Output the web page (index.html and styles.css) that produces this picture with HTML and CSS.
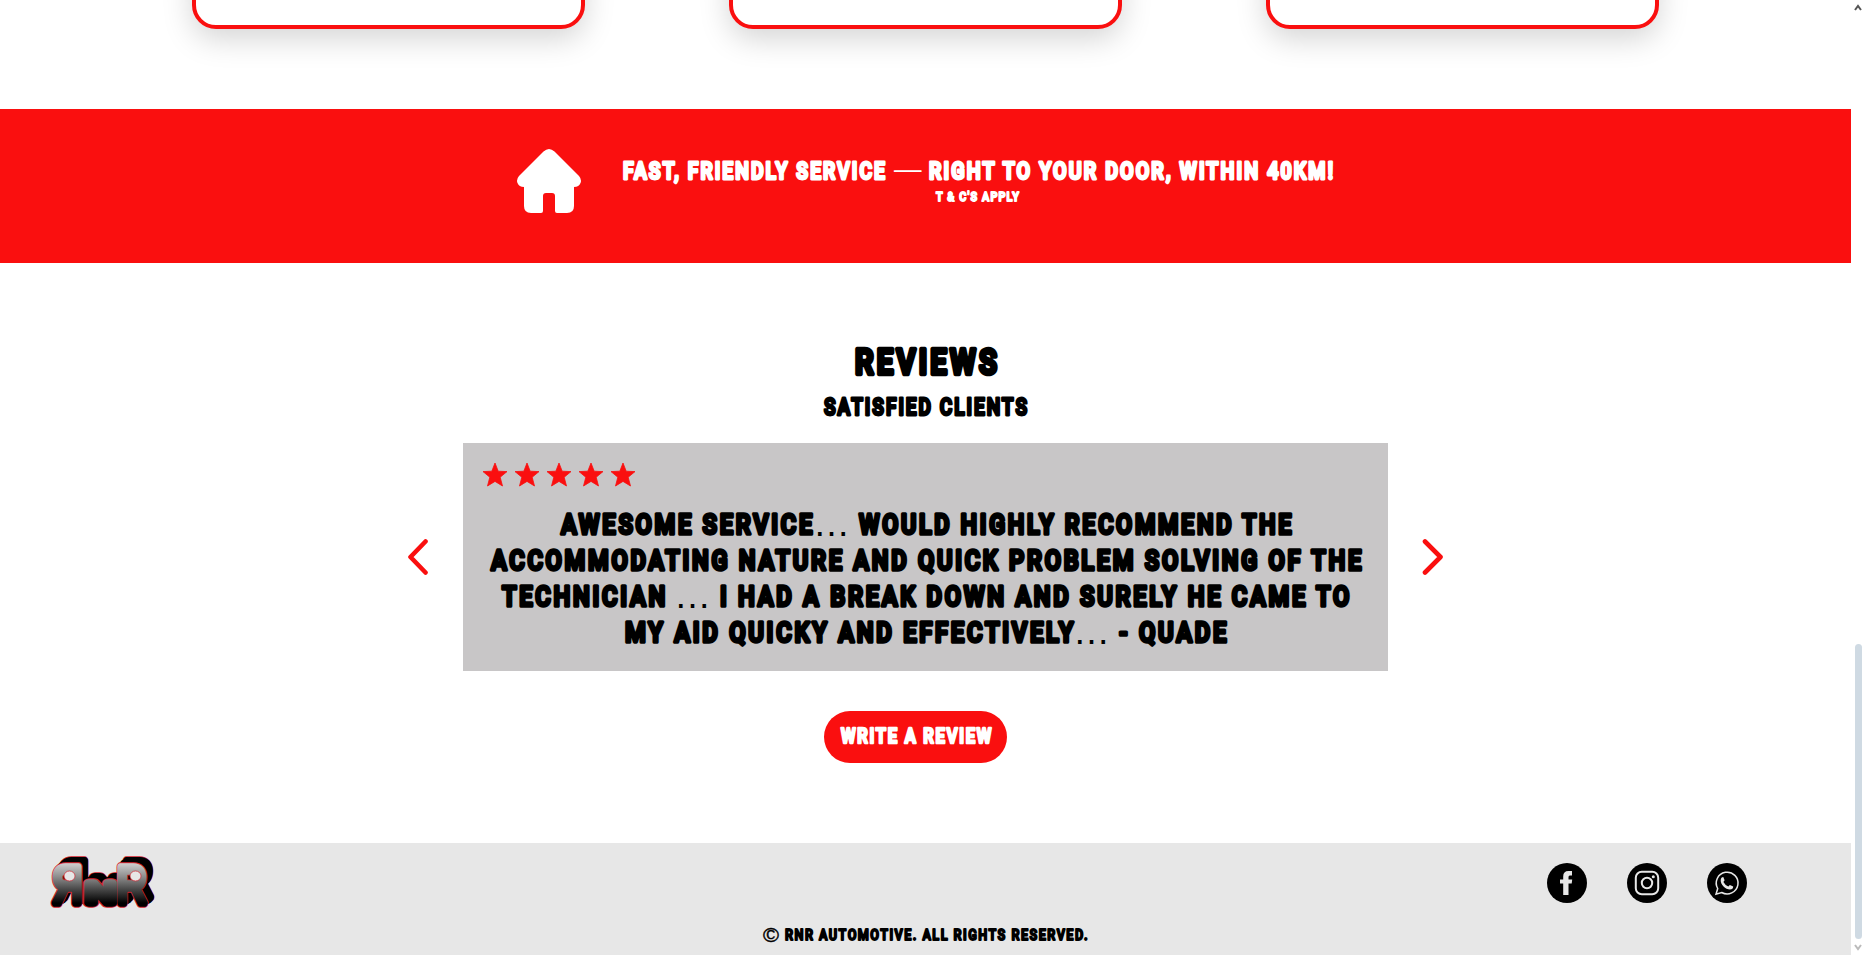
FILE: index.html
```
<!DOCTYPE html>
<html lang="en">
<head>
<meta charset="utf-8">
<title>RNR Automotive</title>
<link rel="stylesheet" href="styles.css">
</head>
<body>
<div class="window">
<div class="page">
  <main>
    <section class="cards">
      <div class="card"></div><div class="card"></div><div class="card"></div>
    </section>

    <section class="banner">
      <svg class="house" viewBox="0 0 64 64"><path fill-rule="evenodd" d="M26.5 2.5Q32-2.500 37.500 2.500L62 27Q65 30.500 63.500 34Q62 38 57 38V57Q57 64 50 64H40Q38 64 38 62V47Q38 44 35 44H29Q26 44 26 47V62Q26 64 24 64H14Q7 64 7 57V38Q2 38 .5 34Q-1 30.500 2 27Z"/></svg>
      <svg class="lettering" width="712" height="50" viewBox="622 157 712 50">
        <g class="t24">
          <text x="623" y="178.700" textLength="264" lengthAdjust="spacingAndGlyphs">FAST, FRIENDLY SERVICE</text>
          <text class="dash" x="891" y="179.800" textLength="33" lengthAdjust="spacingAndGlyphs">—</text>
          <text x="929" y="178.700" textLength="406" lengthAdjust="spacingAndGlyphs">RIGHT TO YOUR DOOR, WITHIN 40KM!</text>
        </g>
        <text class="t14" x="936" y="201" textLength="84" lengthAdjust="spacingAndGlyphs">T &amp; C'S APPLY</text>
      </svg>
    </section>

    <section class="reviews">
      <h2><svg class="lettering" width="144" height="30" viewBox="854 347 144 30"><text class="t36" x="855" y="374" textLength="145" lengthAdjust="spacingAndGlyphs">REVIEWS</text></svg></h2>
      <h3><svg class="lettering" width="205" height="21" viewBox="824 396 205 21"><text class="t24" x="825" y="414.800" textLength="205" lengthAdjust="spacingAndGlyphs">SATISFIED CLIENTS</text></svg></h3>
      <div class="carousel">
        <svg class="arrow" viewBox="0 0 22 36"><path d="M17.500 2.500L2.500 18L17.500 33.500"/></svg>
        <article class="quote">
          <div class="stars">
            <svg viewBox="0 0 24 24"><path d="M12 0L15.200 8.200L24 8.600L17.200 14.200L19.500 23L12 18.400L4.500 23L6.800 14.200L0 8.600L8.800 8.200Z"/></svg>
            <svg viewBox="0 0 24 24"><path d="M12 0L15.200 8.200L24 8.600L17.200 14.200L19.500 23L12 18.400L4.500 23L6.800 14.200L0 8.600L8.800 8.200Z"/></svg>
            <svg viewBox="0 0 24 24"><path d="M12 0L15.200 8.200L24 8.600L17.200 14.200L19.500 23L12 18.400L4.500 23L6.800 14.200L0 8.600L8.800 8.200Z"/></svg>
            <svg viewBox="0 0 24 24"><path d="M12 0L15.200 8.200L24 8.600L17.200 14.200L19.500 23L12 18.400L4.500 23L6.800 14.200L0 8.600L8.800 8.200Z"/></svg>
            <svg viewBox="0 0 24 24"><path d="M12 0L15.200 8.200L24 8.600L17.200 14.200L19.500 23L12 18.400L4.500 23L6.800 14.200L0 8.600L8.800 8.200Z"/></svg>
          </div>
          <svg class="lettering" width="925" height="144" viewBox="463 507 925 144">
            <g class="t29">
              <text x="561" y="534.400" textLength="254" lengthAdjust="spacingAndGlyphs">AWESOME SERVICE</text>
              <text class="dots" x="813" y="535.500" textLength="37" lengthAdjust="spacingAndGlyphs">…</text>
              <text x="859" y="534.400" textLength="435" lengthAdjust="spacingAndGlyphs">WOULD HIGHLY RECOMMEND THE</text>
              <text x="491" y="570.400" textLength="873" lengthAdjust="spacingAndGlyphs">ACCOMMODATING NATURE AND QUICK PROBLEM SOLVING OF THE</text>
              <text x="502" y="606.400" textLength="166" lengthAdjust="spacingAndGlyphs">TECHNICIAN</text>
              <text class="dots" x="674" y="607.500" textLength="37" lengthAdjust="spacingAndGlyphs">…</text>
              <text x="720" y="606.400" textLength="632" lengthAdjust="spacingAndGlyphs">I HAD A BREAK DOWN AND SURELY HE CAME TO</text>
              <text x="625" y="642.400" textLength="451" lengthAdjust="spacingAndGlyphs">MY AID QUICKY AND EFFECTIVELY</text>
              <text class="dots" x="1073" y="643.500" textLength="37" lengthAdjust="spacingAndGlyphs">…</text>
              <text x="1119" y="642.400" textLength="110" lengthAdjust="spacingAndGlyphs">- QUADE</text>
            </g>
          </svg>
        </article>
        <svg class="arrow" viewBox="0 0 22 36"><path d="M4 2.500L19.500 18L4 33.500"/></svg>
      </div>
      <div class="write"><svg class="lettering" width="152" height="18" viewBox="840 727 152 18"><text class="t20" x="841" y="742.300" textLength="152" lengthAdjust="spacingAndGlyphs">WRITE A REVIEW</text></svg></div>
    </section>
  </main>

  <footer>
    <div class="footer-row">
      <svg class="logo" viewBox="50 855 107 54">
        <defs>
          <linearGradient id="metal" gradientUnits="userSpaceOnUse" x1="0" y1="-40" x2="0" y2="0"><stop offset="0" stop-color="#d0d0d0"/><stop offset=".35" stop-color="#8c8c8c"/><stop offset=".7" stop-color="#3f3f3f"/><stop offset="1" stop-color="#000"/></linearGradient>
          <g id="mark">
            <text transform="translate(82 903) scale(-.8 1)" x="0" y="0" font-size="51">R</text>
            <text transform="translate(86 903)" x="0" y="0" font-size="29" textLength="29" lengthAdjust="spacingAndGlyphs">N</text>
            <text transform="translate(117 903) scale(.8 1)" x="0" y="0" font-size="51">R</text>
          </g>
        </defs>
        <g class="rim"><use href="#mark" x="6" y="-6"/></g>
        <g class="side"><use href="#mark" x="6" y="-6"/><use href="#mark" x="4.500" y="-4.500"/><use href="#mark" x="3" y="-3"/></g>
        <g class="rim"><use href="#mark"/></g>
        <use class="metal" href="#mark"/>
        <g class="holes"><ellipse cx="69.500" cy="876" rx="5.500" ry="5"/><ellipse cx="135.500" cy="876" rx="5.500" ry="5"/></g>
      </svg>
      <div class="social">
        <svg viewBox="0 0 40 40"><circle cx="20" cy="20" r="20"/><path class="fill" d="M16.200 32V20.500H13V16.500H16.200V13.500Q16.200 8 21.500 8H25V12.500H22.800Q21.500 12.500 21.500 14V16.500H25.200L24.700 20.500H21.500V32Z"/></svg>
        <svg viewBox="0 0 40 40"><circle cx="20" cy="20" r="20"/><rect class="line" x="8.800" y="8.800" width="22.400" height="22.400" rx="6"/><circle class="line" cx="20" cy="20" r="5.200"/><circle class="fill" cx="26.300" cy="13.800" r="1.500"/></svg>
        <svg viewBox="0 0 40 40"><circle cx="20" cy="20" r="20"/><path class="line thin" d="M9 31.200L10.700 25.500A10.900 10.900 0 1 1 14.700 29.500Z"/><path class="fill" d="M16.300 14L17.600 17.200L16.400 19Q18 22 21.300 23.500L22.900 21.900L26.200 23.500Q26.200 26.500 23 26.600C18.500 26.600 13.400 21.500 13.700 17Q14 14 16.300 14Z"/></svg>
      </div>
    </div>
    <svg class="lettering copyright" width="326" height="18" viewBox="763 926 326 18">
      <text class="circle-c" x="763" y="941.500" textLength="16" lengthAdjust="spacingAndGlyphs">©</text>
      <text class="t15" x="785" y="940" textLength="304" lengthAdjust="spacingAndGlyphs">RNR AUTOMOTIVE. ALL RIGHTS RESERVED.</text>
    </svg>
  </footer>
</div>
<div class="scrollbar">
  <svg viewBox="0 0 8 7"><path d="M1 6L4 2L7 6" stroke="#555"/></svg>
  <div class="thumb"></div>
  <svg viewBox="0 0 8 7"><path d="M1 1L4 5L7 1" stroke="#bbb"/></svg>
</div>
</div>
</body>
</html>
```
FILE: styles.css
```
* { box-sizing: border-box; }
body { margin: 0; background: #fff; font-family: Roboto, sans-serif; }
svg { display: block; flex: none; }
h2, h3 { margin: 0; }

.window { display: flex; height: 955px; overflow: hidden; }
.page { width: 1851px; display: flex; flex-direction: column; }
main { flex: 1; display: flex; flex-direction: column; }

.cards { height: 109px; display: flex; justify-content: center; gap: 144px; }
.card {
  width: 393px; height: 129px; margin-top: -100px;
  border: 4px solid #fa0f0f; border-radius: 24px; background: #fff;
  box-shadow: 0 10px 30px rgba(0, 0, 0, .17);
}

.banner { position: relative; height: 154px; background: #fa0f0f; display: flex; padding: 40px 0 0 517px; gap: 41px; }
.house { width: 64px; height: 64px; fill: #fff; }
.banner .lettering { margin-top: 8px; fill: #fff; stroke: #fff; }

.lettering { overflow: visible; fill: #000; stroke: #000; stroke-linejoin: round; font-family: Roboto, sans-serif; font-weight: 600; }
.t14 { font-size: 13.300px; stroke-width: 1.800px; letter-spacing: 1.400px; }
.t15 { font-size: 14.500px; stroke-width: 1.800px; letter-spacing: 1.700px; }
.t20 { font-size: 19.800px; stroke-width: 2.600px; letter-spacing: 2.100px; }
.t24 { font-size: 23.700px; stroke-width: 2.900px; letter-spacing: 2.500px; }
.t29 { font-size: 28px; stroke-width: 3.500px; letter-spacing: 3.200px; }
.t36 { font-size: 34.500px; stroke-width: 4.400px; letter-spacing: 3.800px; }
.dash { stroke: none; font-weight: 400; letter-spacing: 0; }
.dots { stroke: none; font-family: "Liberation Sans", sans-serif; font-weight: 400; font-size: 37px; letter-spacing: 0; }

.reviews { flex: 1; display: flex; flex-direction: column; align-items: center; padding-top: 84px; }
.reviews h3 { margin: 19px 0 26px; }
.carousel { display: flex; align-items: center; gap: 33px; }
.arrow { width: 22px; height: 36px; fill: none; stroke: #fa0f0f; stroke-width: 4.600; stroke-linecap: round; stroke-linejoin: round; }
.quote { width: 925px; height: 228px; background: #c8c6c7; padding-top: 20px; }
.stars { display: flex; gap: 8px; padding-left: 20px; margin-bottom: 20px; }
.stars svg { width: 24px; height: 24px; fill: #fa0f0f; stroke: #fa0f0f; stroke-width: .8; stroke-linejoin: round; overflow: visible; }
.write {
  width: 183px; height: 52px; margin: 40px 20px 0 0; border-radius: 26px; background: #fa0f0f;
  display: flex; align-items: center; justify-content: center;
}
.write .lettering { fill: #fff; stroke: #fff; }

footer { height: 112px; background: #e7e7e7; display: flex; flex-direction: column; align-items: center; }
.footer-row { width: 100%; height: 83px; display: flex; justify-content: space-between; padding: 12px 104px 0 50px; }
.logo { width: 107px; height: 54px; overflow: visible; font-family: "Liberation Sans", sans-serif; font-weight: 400; stroke-linejoin: round; }
.rim { fill: #d32531; stroke: #d32531; stroke-width: 9.400px; }
.side { fill: #000; stroke: #000; stroke-width: 8.200px; }
.metal { fill: url(#metal); stroke: url(#metal); stroke-width: 7.600px; }
.holes { fill: #e7e7e7; stroke: #d32531; stroke-width: .7px; }
.social { display: flex; gap: 40px; padding-top: 8px; }
.social svg { width: 40px; height: 40px; }
.social .fill { fill: #e7e7e7; }
.social .line { fill: none; stroke: #e7e7e7; stroke-width: 2; }
.social .thin { stroke-width: 1.500; }
.circle-c { font-family: "Liberation Sans", sans-serif; font-weight: 400; font-size: 20px; stroke-width: .4px; }

.scrollbar { width: 15px; display: flex; flex-direction: column; align-items: center; padding: 4px 1px 4px 0; }
.scrollbar svg { width: 8px; height: 7px; fill: none; stroke-width: 2; }
.thumb { width: 7px; height: 296px; margin: 633px 0 5px; border-radius: 4px; background: #cfdae3; }
```
